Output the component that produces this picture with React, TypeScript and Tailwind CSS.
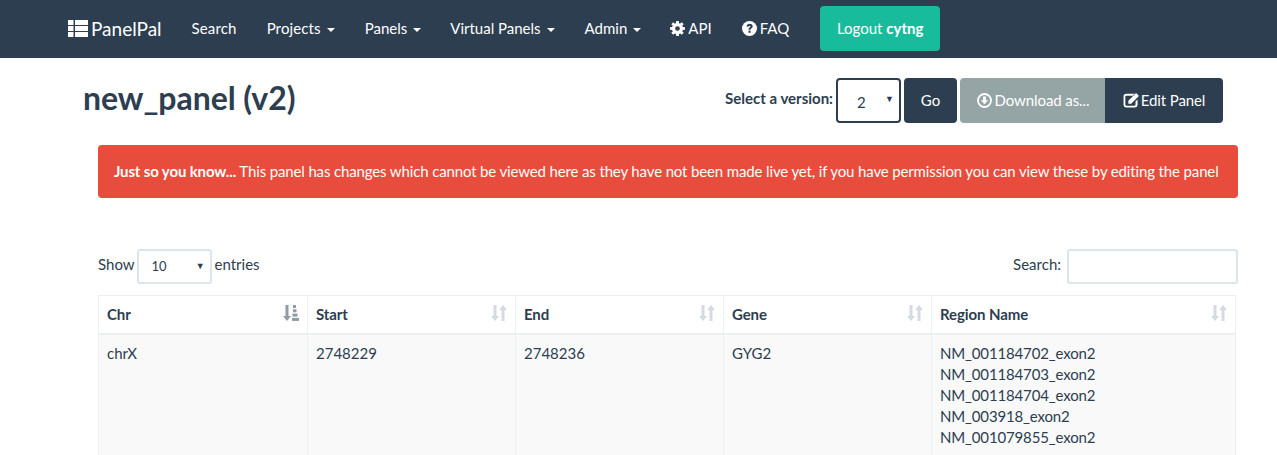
const columns = [
  { name: "Chr", width: "w-[209px]", active: true },
  { name: "Start", width: "w-[208px]", active: false },
  { name: "End", width: "w-[208px]", active: false },
  { name: "Gene", width: "w-[208px]", active: false },
  { name: "Region Name", width: "w-[304px]", active: false },
];

const regions = [
  "NM_001184702_exon2",
  "NM_001184703_exon2",
  "NM_001184704_exon2",
  "NM_003918_exon2",
  "NM_001079855_exon2",
];

const Caret = () => (
  <span className="ml-[6px] inline-block h-0 w-0 border-x-[4px] border-t-[4px] border-x-transparent border-t-white align-middle" />
);

const TableIcon = () => (
  <svg width="20" height="17" viewBox="0 0 20 17" fill="#fff" className="mr-[3px]">
    <rect x="0" y="0" width="5.500" height="5" />
    <rect x="7" y="0" width="13" height="5" />
    <rect x="0" y="6" width="5.500" height="5" />
    <rect x="7" y="6" width="13" height="5" />
    <rect x="0" y="12" width="5.500" height="5" />
    <rect x="7" y="12" width="13" height="5" />
  </svg>
);

const CogIcon = () => (
  <svg width="15" height="15" viewBox="0 0 14 14" className="mr-[3px]">
    <circle cx="7" cy="7" r="3.700" fill="none" stroke="#fff" strokeWidth="3" />
    <path
      d="M5.800 0h2.400l.3 2.500H5.500zM5.800 14h2.400l.3-2.500H5.500zM0 5.800v2.400l2.500.3V5.500zM14 5.800v2.400l-2.500.3V5.500zM1.200 3l1.800-1.800 2 1.600-1.900 1.900zM12.800 3L11 1.200 9 2.800l1.900 1.900zM1.200 11L3 12.800l2-1.600-1.900-1.900zM12.800 11L11 12.800l-2-1.600 1.900-1.900z"
      fill="#fff"
    />
  </svg>
);

const QuestionIcon = () => (
  <svg width="15" height="15" viewBox="0 0 15 15" className="mr-[3px]">
    <circle cx="7.500" cy="7.500" r="7.500" fill="#fff" />
    <path
      d="M4.500 5.600C4.700 3.800 6 2.800 7.700 2.800c1.800 0 3 1 3 2.500 0 1.100-.6 1.600-1.400 2.200-.5.400-.7.600-.7 1.300H6.500c0-1.100.3-1.600 1-2.200.6-.4.900-.7.900-1.100 0-.5-.3-.8-.8-.8-.6 0-.9.400-1 1z"
      fill="#2c3e50"
    />
    <rect x="6.500" y="9.600" width="2.100" height="2.200" fill="#2c3e50" />
  </svg>
);

const DownloadIcon = () => (
  <svg width="15" height="15" viewBox="0 0 15 15" className="mr-[3px] ml-[1px] mb-[1px]">
    <circle cx="7.500" cy="7.500" r="6.500" fill="none" stroke="#fff" strokeWidth="1.800" />
    <path d="M6 3.500h3v3.800h2.200l-3.700 3.900-3.700-3.900H6z" fill="#fff" />
  </svg>
);

const EditIcon = () => (
  <svg width="17" height="16" viewBox="0 0 16 15" className="mr-[1px] mb-[1px]">
    <path
      d="M3 1.500h8L9 3.400H3.200c-.6 0-1 .4-1 1v7.400c0 .6.400 1 1 1h7.600c.6 0 1-.4 1-1V9l1.900-1.900V12c0 1.400-1.100 2.500-2.500 2.500H3C1.600 14.500.5 13.400.5 12V4C.5 2.600 1.600 1.500 3 1.500z"
      fill="#fff"
    />
    <path d="M5 8.200 12.300 1l2.700 2.700L7.700 11 5 11z" fill="#fff" />
  </svg>
);

const SortIcon = ({ active }: { active: boolean }) =>
  active ? (
    <svg width="16" height="16" viewBox="0 0 16 16" fill="#8f9ba6" className="mb-[2px]">
      <path d="M2.500 0h3v11h2.500l-4 5-4-5h2.500z" />
      <rect x="10" y="0" width="3" height="3" />
      <rect x="10" y="4.300" width="3.500" height="3" />
      <rect x="9.500" y="8.600" width="5" height="3" />
      <rect x="9" y="12.900" width="7" height="3" />
    </svg>
  ) : (
    <svg width="16" height="16" viewBox="0 0 16 16" fill="#d5dbe0" className="mb-[2px]">
      <path d="M2.500 0h3v11h2.500l-4 5-4-5h2.500z" />
      <path d="M10.500 16h3V5H16l-4-5-4 5h2.500z" />
    </svg>
  );

export default function App() {
  return (
    <div className="min-h-[455px] overflow-hidden bg-white font-['Lato','Liberation_Sans',sans-serif] text-[15px] leading-[21px] text-[#2c3e50]">
      <nav className="flex h-[58px] items-center bg-[#2c3e50] pl-[68px] text-white">
        <a className="mr-[15px] mb-[1px] flex items-center text-[19px]">
          <TableIcon />
          PanelPal
        </a>
        <a className="mb-[2px] px-[15px] tracking-[0.15px]">Search</a>
        <a className="mb-[2px] px-[15px] tracking-[0.12px]">
          Projects
          <Caret />
        </a>
        <a className="mb-[2px] pl-[15px] pr-[14px]">
          Panels
          <Caret />
        </a>
        <a className="mb-[2px] px-[15px]">
          Virtual Panels
          <Caret />
        </a>
        <a className="mb-[2px] pl-[15px] pr-[14px]">
          Admin
          <Caret />
        </a>
        <a className="mb-[2px] flex items-center px-[15px]">
          <CogIcon />
          API
        </a>
        <a className="mb-[2px] flex items-center px-[15px]">
          <QuestionIcon />
          FAQ
        </a>
        <a className="ml-[16px] mb-[1px] flex h-[45px] w-[120px] items-center justify-center rounded-[4px] bg-[#18bc9c]">
          Logout&nbsp;<b>cytng</b>
        </a>
      </nav>

      <div className="flex items-center justify-between pl-[83px] pr-[54px] pt-[20px]">
        <h1 className="mb-[5px] whitespace-nowrap text-[32px] leading-[38px] font-bold tracking-[-0.05px]">new_panel (v2)</h1>
        <div className="flex items-center">
          <span className="mb-[4px] mr-[3px] font-bold">Select a version:</span>
          <div className="relative mr-[3px] flex h-[45px] w-[65px] items-center rounded-[4px] border-2 border-[#2c3e50] pl-[19px]">
            <span className="mt-[3px]">2</span>
            <span className="absolute right-[5px] top-[14px] text-[9px] leading-[10px]">▼</span>
          </div>
          <a className="mr-[3px] flex h-[45px] w-[53px] items-center justify-center rounded-[4px] bg-[#2c3e50] text-white">Go</a>
          <a className="flex h-[45px] w-[145px] items-center justify-center rounded-l-[4px] bg-[#95a5a6] text-white tracking-[-0.1px]">
            <DownloadIcon />
            Download as...
          </a>
          <a className="flex h-[45px] w-[118px] items-center justify-center rounded-r-[4px] bg-[#2c3e50] text-white tracking-[-0.1px]">
            <EditIcon />
            Edit Panel
          </a>
        </div>
      </div>

      <div className="ml-[98px] mr-[39px] mt-[22px]">
        <div className="flex h-[53px] items-center rounded-[4px] bg-[#e74c3c] px-[16px] text-white">
          <span className="whitespace-nowrap tracking-[-0.14px]">
            <b>Just so you know...</b> This panel has changes which cannot be viewed here as they have not been made live yet, if you have permission you can view these by editing the panel
          </span>
        </div>

        <div className="mt-[51px] flex items-center justify-between">
          <div className="flex items-center">
            <span className="mb-[4px]">Show</span>
            <div className="relative ml-[2px] mr-[3px] flex h-[35px] w-[75px] items-center rounded-[3px] border-2 border-[#dce4ec] pl-[13px] text-[13px]">
              10
              <span className="absolute right-[5px] top-[10px] text-[9px] leading-[10px]">▼</span>
            </div>
            <span className="mb-[4px]">entries</span>
          </div>
          <div className="flex items-center">
            <span className="mb-[4px]">Search:</span>
            <div className="ml-[6px] h-[35px] w-[171px] rounded-[3px] border-2 border-[#dce4ec]" />
          </div>
        </div>

        <table className="mt-[11px] w-[1137px] table-fixed border-collapse">
          <thead>
            <tr>
              {columns.map((col) => (
                <th key={col.name} className={`${col.width} h-[38px] border border-b-2 border-[#ecf0f1] px-[8px] text-left font-bold`}>
                  <div className="flex items-center justify-between tracking-[-0.1px]">
                    {col.name}
                    <SortIcon active={col.active} />
                  </div>
                </th>
              ))}
            </tr>
          </thead>
          <tbody>
            <tr className="bg-[#f9f9f9] align-top">
              <td className="border border-[#ecf0f1] px-[8px] py-[8px]">chrX</td>
              <td className="border border-[#ecf0f1] px-[8px] py-[8px]">2748229</td>
              <td className="border border-[#ecf0f1] px-[8px] py-[8px]">2748236</td>
              <td className="border border-[#ecf0f1] px-[8px] py-[8px]">GYG2</td>
              <td className="border border-[#ecf0f1] px-[8px] py-[8px] tracking-[-0.15px]">
                {regions.map((region) => (
                  <div key={region}>{region}</div>
                ))}
              </td>
            </tr>
          </tbody>
        </table>
      </div>
    </div>
  );
}
